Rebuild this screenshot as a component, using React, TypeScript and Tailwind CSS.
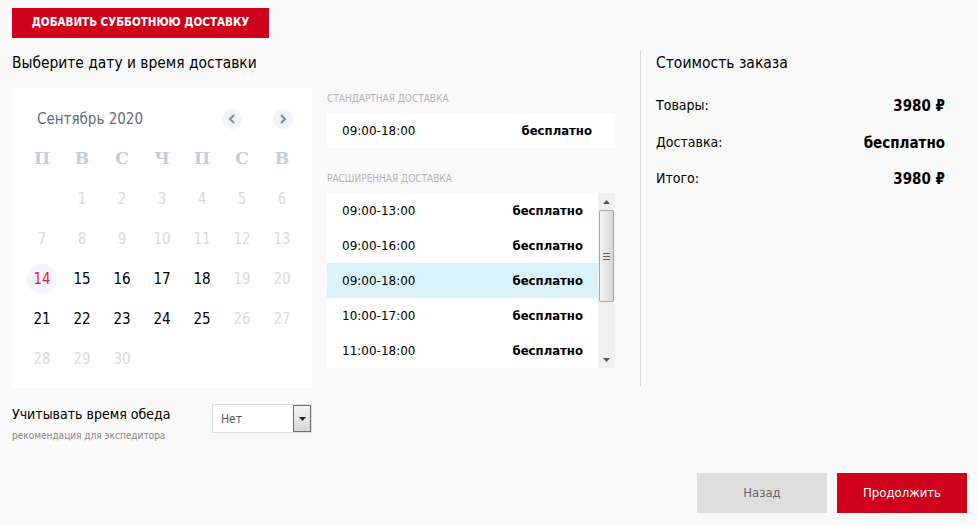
import React from "react";

const tahoma = { fontFamily: '"DejaVu Sans Condensed", "DejaVu Sans", sans-serif' };
const verdana = { fontFamily: '"DejaVu Sans", sans-serif' };

const weeks: (number | null)[][] = [
  [null, 1, 2, 3, 4, 5, 6],
  [7, 8, 9, 10, 11, 12, 13],
  [14, 15, 16, 17, 18, 19, 20],
  [21, 22, 23, 24, 25, 26, 27],
  [28, 29, 30, null, null, null, null],
];
const active = new Set([14, 15, 16, 17, 18, 21, 22, 23, 24, 25]);

const slots = ["09:00-13:00", "09:00-16:00", "09:00-18:00", "10:00-17:00", "11:00-18:00"];

export default function App() {
  return (
    <div className="w-[977px] h-[525px] bg-[#f9f9f9] relative overflow-hidden text-black" style={tahoma}>
      <div className="pt-2 pl-3">
        <button className="w-[257px] h-[30px] bg-[#d0021b] text-white text-[11.5px] font-bold uppercase">
          Добавить субботнюю доставку
        </button>
      </div>

      <div className="flex pl-3 mt-[15px]">
        {/* left block */}
        <div className="w-[603px] flex flex-col">
          <div className="text-[15.4px] leading-[20px] h-[20px]">Выберите дату и время доставки</div>
          <div className="flex mt-[15px]">
            {/* calendar */}
            <div className="w-[300px] h-[300px] bg-white">
              <div className="flex items-center h-[20px] mt-[21px] pl-[25px]">
                <div className="text-[15px] text-[#5c6e80] w-[185px]">Сентябрь 2020</div>
                <div className="w-[20px] h-[20px] rounded-full bg-[#f0f3f8] flex items-center justify-center">
                  <svg width="8" height="10" viewBox="0 0 8 10"><path d="M6 1 L2 5 L6 9" stroke="#7d8d9c" strokeWidth="2" fill="none" /></svg>
                </div>
                <div className="w-[31px]" />
                <div className="w-[20px] h-[20px] rounded-full bg-[#f0f3f8] flex items-center justify-center">
                  <svg width="8" height="10" viewBox="0 0 8 10"><path d="M2 1 L6 5 L2 9" stroke="#7d8d9c" strokeWidth="2" fill="none" /></svg>
                </div>
              </div>
              <div className="grid grid-cols-7 w-[280px] ml-[10px] mt-[10px]">
                {["П", "В", "С", "Ч", "П", "С", "В"].map((d, i) => (
                  <div key={i} className="h-[40px] flex items-center justify-center text-[17px] font-bold text-[#c2ced8]" style={{ fontFamily: '"DejaVu Serif", serif' }}>
                    {d}
                  </div>
                ))}
                {weeks.flat().map((d, i) => (
                  <div key={i} className="h-[40px] flex items-center justify-center">
                    {d !== null && (
                      <div
                        className={
                          "w-[30px] h-[30px] rounded-full flex items-center justify-center text-[15px] " +
                          (d === 14 ? "bg-[#f3f5fa] text-[#eb1c3c]" : active.has(d) ? "text-black" : "text-[#dadada]")
                        }
                      >
                        {d}
                      </div>
                    )}
                  </div>
                ))}
              </div>
            </div>

            {/* delivery */}
            <div className="ml-[15px] w-[288px]">
              <div className="text-[10px] text-[#b4b4b4] uppercase h-[25px] leading-[14px] pt-[4px]">Стандартная доставка</div>
              <div className="h-[35px] bg-white flex items-center justify-between pl-[15px] pr-[23px] text-[12px]" style={verdana}>
                <span>09:00-18:00</span>
                <span className="font-bold text-[13px]" style={tahoma}>бесплатно</span>
              </div>
              <div className="text-[10px] text-[#b4b4b4] uppercase h-[25px] leading-[14px] mt-[20px] pt-[4px]">Расширенная доставка</div>
              <div className="h-[175px] bg-white flex">
                <div className="flex-1">
                  {slots.map((s, i) => (
                    <div
                      key={s}
                      className={"h-[35px] flex items-center justify-between pl-[15px] pr-[15px] text-[12px] " + (i === 2 ? "bg-[#d9f3fc]" : "")}
                      style={verdana}
                    >
                      <span>{s}</span>
                      <span className="font-bold text-[13px]" style={tahoma}>бесплатно</span>
                    </div>
                  ))}
                </div>
                <div className="w-[17px] bg-[#f0f0f0] flex flex-col items-center">
                  <div className="h-[17px] flex items-center justify-center">
                    <svg width="7" height="4" viewBox="0 0 7 4"><path d="M0 4 L3.5 0 L7 4Z" fill="#555" /></svg>
                  </div>
                  <div className="w-[15px] h-[92px] rounded-[2px] border border-[#a8a8a8] bg-gradient-to-r from-[#f2f2f2] via-[#e6e6e6] to-[#d6d6d6] flex flex-col items-center justify-center gap-[2px]">
                    <div className="w-[7px] h-[1px] bg-[#666]" />
                    <div className="w-[7px] h-[1px] bg-[#666]" />
                    <div className="w-[7px] h-[1px] bg-[#666]" />
                  </div>
                  <div className="flex-1" />
                  <div className="h-[17px] flex items-center justify-center">
                    <svg width="7" height="4" viewBox="0 0 7 4"><path d="M0 0 L3.5 4 L7 0Z" fill="#555" /></svg>
                  </div>
                </div>
              </div>
            </div>
          </div>

          {/* lunch */}
          <div className="flex mt-[16px]">
            <div className="w-[200px]">
              <div className="text-[14px] leading-[18px] mt-[1px]">Учитывать время обеда</div>
              <div className="text-[10px] text-[#888] mt-[5px]">рекомендация для экспедитора</div>
            </div>
            <div className="w-[100px] h-[29px] bg-white border border-[#dcdcdc] flex items-center">
              <span className="flex-1 pl-[8px] text-[12px] text-[#555]">Нет</span>
              <div className="w-[18px] h-[27px] border border-[#707070] bg-gradient-to-b from-[#f4f4f4] to-[#d8d8d8] flex items-center justify-center">
                <svg width="7" height="4" viewBox="0 0 7 4"><path d="M0 0 L3.5 4 L7 0Z" fill="#222" /></svg>
              </div>
            </div>
          </div>
        </div>

        {/* divider */}
        <div className="ml-[25px] w-[1px] h-[335px] bg-[#d6d6d6] -mt-[2px]" />

        {/* summary */}
        <div className="ml-[15px] w-[289px]">
          <div className="text-[15.5px] leading-[20px]">Стоимость заказа</div>
          <div className="mt-[22px] flex flex-col text-[14px]">
            <div className="h-[37px] flex justify-between items-start">
              <span>Товары:</span>
              <span className="font-bold text-[15px]">3980 ₽</span>
            </div>
            <div className="h-[36px] flex justify-between items-start">
              <span>Доставка:</span>
              <span className="font-bold text-[15px]">бесплатно</span>
            </div>
            <div className="h-[36px] flex justify-between items-start">
              <span>Итого:</span>
              <span className="font-bold text-[15px]">3980 ₽</span>
            </div>
          </div>
        </div>
      </div>

      <div className="absolute left-[697px] top-[473px] flex gap-[10px]">
        <button className="w-[130px] h-[40px] bg-[#dedede] text-[#666] text-[13px]">Назад</button>
        <button className="w-[130px] h-[40px] bg-[#d0021b] text-white text-[13px]">Продолжить</button>
      </div>
    </div>
  );
}
